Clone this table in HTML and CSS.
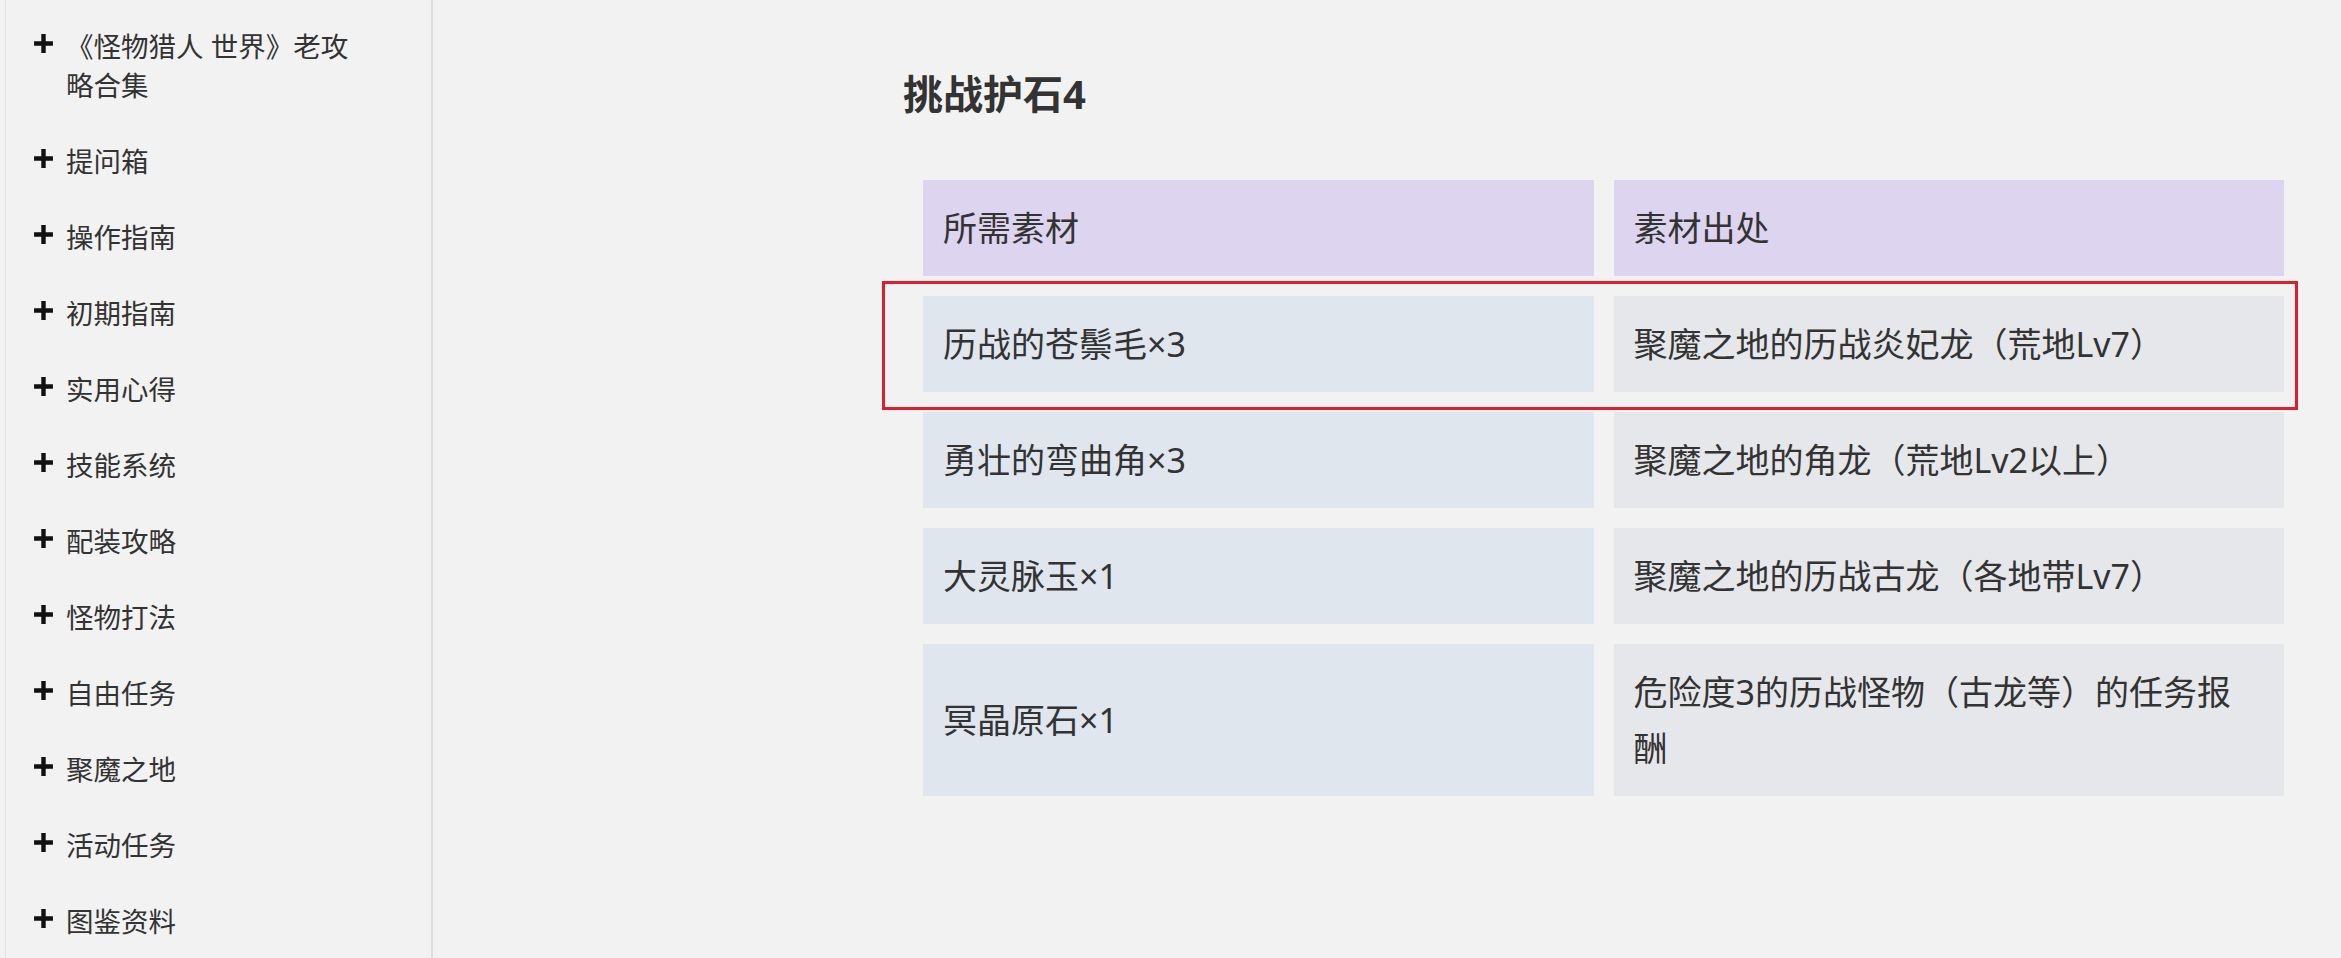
FILE: index.html
```html
<!DOCTYPE html>
<html lang="zh-CN">
<head>
<meta charset="utf-8">
<title>挑战护石4</title>
<link rel="stylesheet" href="styles.css">
</head>
<body>
<div class="page">
  <aside class="sidebar">
    <ul class="nav">
      <li class="nav-item"><span class="plus"><svg viewBox="0 0 20 20" width="21" height="21"><path d="M10 1v18M1 10h18" stroke="#111" stroke-width="4.2" fill="none"/></svg></span><span class="label">《怪物猎人 世界》老攻略合集</span></li>
      <li class="nav-item"><span class="plus"><svg viewBox="0 0 20 20" width="21" height="21"><path d="M10 1v18M1 10h18" stroke="#111" stroke-width="4.2" fill="none"/></svg></span><span class="label">提问箱</span></li>
      <li class="nav-item"><span class="plus"><svg viewBox="0 0 20 20" width="21" height="21"><path d="M10 1v18M1 10h18" stroke="#111" stroke-width="4.2" fill="none"/></svg></span><span class="label">操作指南</span></li>
      <li class="nav-item"><span class="plus"><svg viewBox="0 0 20 20" width="21" height="21"><path d="M10 1v18M1 10h18" stroke="#111" stroke-width="4.2" fill="none"/></svg></span><span class="label">初期指南</span></li>
      <li class="nav-item"><span class="plus"><svg viewBox="0 0 20 20" width="21" height="21"><path d="M10 1v18M1 10h18" stroke="#111" stroke-width="4.2" fill="none"/></svg></span><span class="label">实用心得</span></li>
      <li class="nav-item"><span class="plus"><svg viewBox="0 0 20 20" width="21" height="21"><path d="M10 1v18M1 10h18" stroke="#111" stroke-width="4.2" fill="none"/></svg></span><span class="label">技能系统</span></li>
      <li class="nav-item"><span class="plus"><svg viewBox="0 0 20 20" width="21" height="21"><path d="M10 1v18M1 10h18" stroke="#111" stroke-width="4.2" fill="none"/></svg></span><span class="label">配装攻略</span></li>
      <li class="nav-item"><span class="plus"><svg viewBox="0 0 20 20" width="21" height="21"><path d="M10 1v18M1 10h18" stroke="#111" stroke-width="4.2" fill="none"/></svg></span><span class="label">怪物打法</span></li>
      <li class="nav-item"><span class="plus"><svg viewBox="0 0 20 20" width="21" height="21"><path d="M10 1v18M1 10h18" stroke="#111" stroke-width="4.2" fill="none"/></svg></span><span class="label">自由任务</span></li>
      <li class="nav-item"><span class="plus"><svg viewBox="0 0 20 20" width="21" height="21"><path d="M10 1v18M1 10h18" stroke="#111" stroke-width="4.2" fill="none"/></svg></span><span class="label">聚魔之地</span></li>
      <li class="nav-item"><span class="plus"><svg viewBox="0 0 20 20" width="21" height="21"><path d="M10 1v18M1 10h18" stroke="#111" stroke-width="4.2" fill="none"/></svg></span><span class="label">活动任务</span></li>
      <li class="nav-item"><span class="plus"><svg viewBox="0 0 20 20" width="21" height="21"><path d="M10 1v18M1 10h18" stroke="#111" stroke-width="4.2" fill="none"/></svg></span><span class="label">图鉴资料</span></li>
    </ul>
  </aside>
  <main class="content">
    <h2 class="title">挑战护石4</h2>
    <div class="table-wrap">
      <table class="mat-table">
        <thead>
          <tr><th class="head">所需素材</th><th class="head">素材出处</th></tr>
        </thead>
        <tbody>
          <tr><td class="mat">历战的苍鬃毛×3</td><td class="src">聚魔之地的历战炎妃龙（荒地Lv7）</td></tr>
          <tr><td class="mat">勇壮的弯曲角×3</td><td class="src">聚魔之地的角龙（荒地Lv2以上）</td></tr>
          <tr><td class="mat">大灵脉玉×1</td><td class="src">聚魔之地的历战古龙（各地带Lv7）</td></tr>
          <tr><td class="mat">冥晶原石×1</td><td class="src">危险度3的历战怪物（古龙等）的任务报酬</td></tr>
        </tbody>
      </table>
      <div class="highlight"></div>
    </div>
  </main>
</div>
</body>
</html>
```
FILE: styles.css
```css
html, body {
  margin: 0;
  padding: 0;
  background: #f2f2f2;
}

body {
  font-family: "Noto Sans", "Noto Sans CJK SC", sans-serif;
  color: #333;
  overflow: hidden;
}

.page {
  display: flex;
  min-height: 100vh;
}

.sidebar {
  flex: none;
  width: 428px;
  box-sizing: border-box;
  margin-left: 5px;
  border-left: 1px solid #e4e4e4;
  border-right: 2px solid #dedede;
  padding-top: 27px;
}

.nav {
  list-style: none;
  margin: 0;
  padding: 0 0 0 27px;
}

.nav-item {
  display: flex;
  align-items: flex-start;
  gap: 12px;
  font-size: 27.5px;
  line-height: 39px;
  margin-bottom: 37px;
  color: #333;
}

.plus {
  flex: none;
  width: 21px;
  height: 21px;
  margin-top: 5.5px;
  display: block;
}

.plus svg {
  display: block;
}

.label {
  width: 300px;
}

.content {
  flex: 1;
  min-width: 0;
  padding: 66px 37px 0 470px;
}

.title {
  margin: 0 0 38px;
  font-size: 40px;
  line-height: 56px;
  font-weight: 700;
  color: #333;
}

.table-wrap {
  position: relative;
  width: 1401px;
}

.mat-table {
  width: 1401px;
  table-layout: fixed;
  border-collapse: separate;
  border-spacing: 20px;
}

.mat-table th,
.mat-table td {
  padding: 20px 24px 20px 20px;
  font-size: 34px;
  line-height: 56px;
  font-weight: 400;
  text-align: left;
  vertical-align: middle;
  color: #333;
}

.head {
  background: #ddd4ef;
}

.mat {
  background: #dfe6ee;
}

.src {
  background: #e6e7ea;
}

.highlight {
  position: absolute;
  left: -21px;
  top: 121px;
  width: 1416px;
  height: 129px;
  box-sizing: border-box;
  border: 3px solid #d9202e;
  pointer-events: none;
}
```
